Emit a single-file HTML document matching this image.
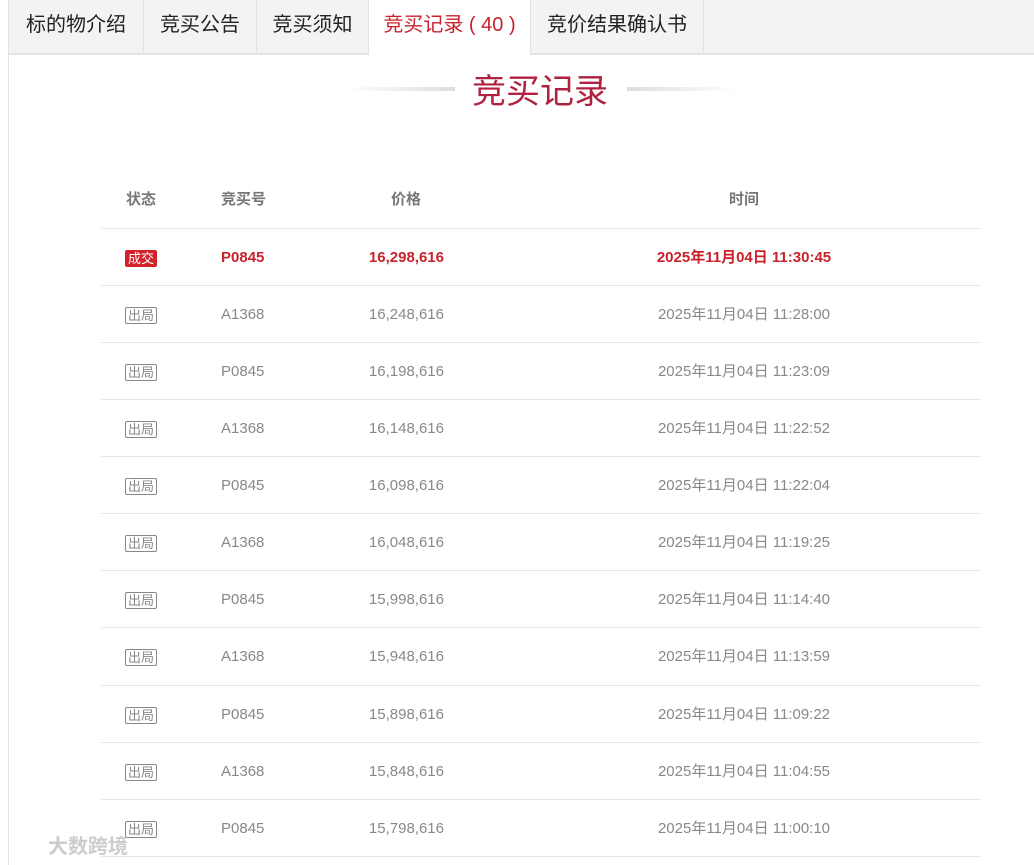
<!DOCTYPE html>
<html><head><meta charset="utf-8"><style>
html,body{margin:0;background:#fff;font-family:"Liberation Sans","Noto Sans CJK SC",sans-serif;width:1034px;height:865px;overflow:hidden;position:relative}
.tabs{position:absolute;left:8px;top:0;width:1026px;height:53px;background:#f3f3f3;border-bottom:2px solid #e4e4e4;border-left:1px solid #e4e4e4}
.tab{position:absolute;top:0;height:53px;line-height:50px;font-size:20px;color:#222;text-align:center;border-right:1px solid #e2e2e2;box-sizing:border-box}
.tab.act{background:#fff;color:#c8222b;height:55px}
.panel{position:absolute;left:8px;top:55px;width:1026px;height:810px;border-left:1px solid #e4e4e4;box-sizing:border-box}
.title{position:absolute;left:0;width:1080px;top:64px;text-align:center;font-size:34px;color:#b0223f}
.ln{position:absolute;top:87px;height:4px;width:110px}
.row{position:absolute;left:101px;width:880px;height:57px;border-top:1px solid #e6e6e6;font-size:15px;color:#888}
.row div{position:absolute;top:0;line-height:57px}
.c1{left:0;width:80px;text-align:center}
.c2{left:120px}
.c3{left:180px;width:163px;text-align:right}
.c4{left:463px;width:360px;text-align:center}
.hd{font-weight:bold;color:#777;border-top:none}
.red{color:#c8222b;font-weight:bold}
.b{display:inline-block;font-size:13px;line-height:15px;padding:0 2px;border:1px solid #888;border-radius:2px;vertical-align:middle;font-weight:normal}
.b.r{background:#d3222a;color:#fff;border-color:#d3222a}
</style></head><body>
<div class="tabs">
<div class="tab" style="left:0;width:135px">标的物介绍</div>
<div class="tab" style="left:135px;width:113px">竞买公告</div>
<div class="tab" style="left:248px;width:112px">竞买须知</div>
<div class="tab act" style="left:360px;width:162px">竞买记录 ( 40 )</div>
<div class="tab" style="left:522px;width:173px">竞价结果确认书</div>
</div>
<div class="panel"></div>
<div class="ln" style="left:345px;background:linear-gradient(90deg,#fff,#ddd)"></div>
<div class="ln" style="left:627px;background:linear-gradient(90deg,#ddd,#fff)"></div>
<div class="title">竞买记录</div>
<div class="row hd" style="top:171px"><div class="c1">状态</div><div class="c2">竞买号</div><div class="c3" style="text-align:center;left:250px;width:110px">价格</div><div class="c4">时间</div></div>
<div class="row red" style="top:228px"><div class="c1"><span class="b r">成交</span></div><div class="c2">P0845</div><div class="c3">16,298,616</div><div class="c4">2025年11月04日 11:30:45</div></div>
<div class="row" style="top:285px"><div class="c1"><span class="b">出局</span></div><div class="c2">A1368</div><div class="c3">16,248,616</div><div class="c4">2025年11月04日 11:28:00</div></div>
<div class="row" style="top:342px"><div class="c1"><span class="b">出局</span></div><div class="c2">P0845</div><div class="c3">16,198,616</div><div class="c4">2025年11月04日 11:23:09</div></div>
<div class="row" style="top:399px"><div class="c1"><span class="b">出局</span></div><div class="c2">A1368</div><div class="c3">16,148,616</div><div class="c4">2025年11月04日 11:22:52</div></div>
<div class="row" style="top:456px"><div class="c1"><span class="b">出局</span></div><div class="c2">P0845</div><div class="c3">16,098,616</div><div class="c4">2025年11月04日 11:22:04</div></div>
<div class="row" style="top:513px"><div class="c1"><span class="b">出局</span></div><div class="c2">A1368</div><div class="c3">16,048,616</div><div class="c4">2025年11月04日 11:19:25</div></div>
<div class="row" style="top:570px"><div class="c1"><span class="b">出局</span></div><div class="c2">P0845</div><div class="c3">15,998,616</div><div class="c4">2025年11月04日 11:14:40</div></div>
<div class="row" style="top:627px"><div class="c1"><span class="b">出局</span></div><div class="c2">A1368</div><div class="c3">15,948,616</div><div class="c4">2025年11月04日 11:13:59</div></div>
<div class="row" style="top:685px"><div class="c1"><span class="b">出局</span></div><div class="c2">P0845</div><div class="c3">15,898,616</div><div class="c4">2025年11月04日 11:09:22</div></div>
<div class="row" style="top:742px"><div class="c1"><span class="b">出局</span></div><div class="c2">A1368</div><div class="c3">15,848,616</div><div class="c4">2025年11月04日 11:04:55</div></div>
<div class="row" style="top:799px;height:56px"><div class="c1"><span class="b">出局</span></div><div class="c2">P0845</div><div class="c3">15,798,616</div><div class="c4">2025年11月04日 11:00:10</div></div>
<div class="row" style="top:856px;height:8px"></div>
<div style="position:absolute;left:48px;top:834px;font-size:20px;line-height:26px;color:#ccc;font-weight:bold">大数跨境</div>
</body></html>
